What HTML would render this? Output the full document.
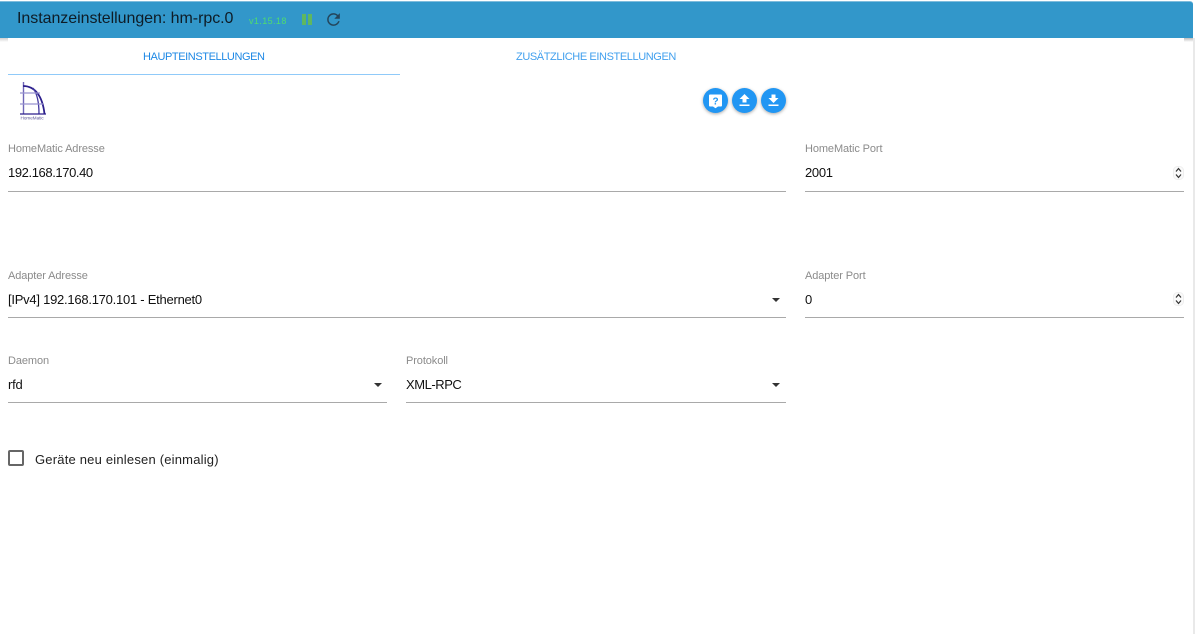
<!DOCTYPE html>
<html lang="de">
<head>
<meta charset="utf-8">
<title>Instanzeinstellungen: hm-rpc.0</title>
<style>
html,body{margin:0;padding:0;width:1200px;height:634px;overflow:hidden;background:#fff;font-family:"Liberation Sans","DejaVu Sans",sans-serif}
body{filter:blur(.3px)}
.a{position:absolute;white-space:nowrap}
#hdr{left:0;top:1px;width:1193px;height:37px;background:#3297ca;border-top:1px solid #7fbcdc;box-sizing:border-box;border-top-right-radius:3px}
#edge{left:1193px;top:38px;width:2px;height:596px;background:#e9e9e9}
#shl{left:0;top:38px;width:8px;height:4px;background:linear-gradient(#d0d0d0,#fff)}
#shr{left:1184px;top:38px;width:9px;height:4px;background:linear-gradient(#bdbdbd,#fff)}
.lbl{font-size:11px;color:#8b8b8b;letter-spacing:-.1px;line-height:14px}
.val{font-size:13px;color:#111;line-height:16px;letter-spacing:-.25px}
.ln{height:1px;background:#a9a9a9}
.tri{width:0;height:0;border-left:4.5px solid transparent;border-right:4.5px solid transparent;border-top:4.5px solid #333}
.fab{width:25px;height:25px;border-radius:50%;background:#2196f3;box-shadow:0 1px 3px rgba(0,0,0,.35)}
.fab svg{position:absolute;left:0;top:0}
</style>
</head>
<body>
<div class="a" id="hdr"></div>
<div class="a" id="edge"></div>
<div class="a" id="shl"></div>
<div class="a" id="shr"></div>

<div class="a" style="left:17px;top:9px;font-size:16px;line-height:20px;color:#0e1c26;letter-spacing:-.05px">Instanzeinstellungen: hm-rpc.0</div>
<div class="a" style="left:249px;top:15px;font-size:9px;line-height:12px;color:#4fdc6f;letter-spacing:.4px">v1.15.18</div>
<div class="a" style="left:302px;top:14px;width:3.500px;height:11px;background:#5fb75f"></div>
<div class="a" style="left:308px;top:14px;width:3.500px;height:11px;background:#5fb75f"></div>
<svg class="a" style="left:324px;top:10px" width="19" height="19" viewBox="0 0 24 24"><path fill="#24465c" d="M17.65 6.35A7.96 7.96 0 0 0 12 4a8 8 0 1 0 7.73 10h-1.800A6.200 6.200 0 1 1 12 5.800c1.720 0 3.240.7 4.340 1.840L13 11h7V4z"/></svg>

<div class="a" style="left:143px;top:50px;font-size:11px;line-height:14px;color:#1e88e5;letter-spacing:-.41px">HAUPTEINSTELLUNGEN</div>
<div class="a" style="left:516px;top:50px;font-size:11px;line-height:14px;color:#42a0ee;letter-spacing:-.4px">ZUSÄTZLICHE EINSTELLUNGEN</div>
<div class="a" style="left:8px;top:74px;width:392px;height:1px;background:#90caf9"></div>

<svg class="a" style="left:18px;top:81px" width="30" height="40" viewBox="0 0 30 40">
<g fill="none">
<path d="M5.500 1V33" stroke="#6f66b8" stroke-width="1.400"/>
<path d="M5 5C17 5 24.500 15 26.500 33" stroke="#2c1f8c" stroke-width="1.800"/>
<path d="M15 7C19.500 13 21 23 21 33" stroke="#4238a0" stroke-width="1.300"/>
<path d="M2 12H22" stroke="#9892cf" stroke-width="1.200"/>
<path d="M2 23H25" stroke="#9892cf" stroke-width="1.200"/>
<path d="M2 33H28" stroke="#2c1f8c" stroke-width="1.300"/>
</g>
<text x="2.500" y="38.500" font-size="4.600" fill="#5a5396" font-family="Liberation Sans,sans-serif">HomeMatic</text>
</svg>

<div class="a fab" style="left:703px;top:88px"><svg width="25" height="25" viewBox="0 0 25 25"><path fill="#fff" d="M7 6.500h11a1 1 0 0 1 1 1v10a1 1 0 0 1-1 1h-3l-2.500 1.800L10 18.500H7a1 1 0 0 1-1-1v-10a1 1 0 0 1 1-1z"/><text x="12.500" y="16.500" text-anchor="middle" font-size="10" font-weight="bold" fill="#2196f3" font-family="Liberation Sans,sans-serif">?</text></svg></div>
<div class="a fab" style="left:732px;top:88px"><svg width="25" height="25" viewBox="0 0 25 25"><path fill="#fff" d="M10.500 14.500v-3.500H7.500l5-5 5 5h-3v3.500zM7.500 16.500h10v1.500h-10z"/></svg></div>
<div class="a fab" style="left:761px;top:88px"><svg width="25" height="25" viewBox="0 0 25 25"><path fill="#fff" d="M10.500 6.500h4V10h3l-5 5-5-5h3zM7.500 16.500h10v1.500h-10z"/></svg></div>

<div class="a lbl" style="left:8px;top:142px">HomeMatic Adresse</div>
<div class="a val" style="left:8px;top:165px;letter-spacing:-.4px">192.168.170.40</div>
<div class="a ln" style="left:8px;top:191px;width:778px"></div>

<div class="a lbl" style="left:805px;top:142px">HomeMatic Port</div>
<div class="a val" style="left:805px;top:165px;letter-spacing:-.3px">2001</div>
<div class="a ln" style="left:805px;top:191px;width:379px"></div>
<svg class="a" style="left:1173px;top:166px" width="11" height="14" viewBox="0 0 11 14"><rect x=".5" y=".5" width="10" height="13" rx="4" fill="#fafafa" stroke="#eee"/><path d="M3 5.500l2.500-3 2.500 3M3 8.500l2.500 3 2.500-3" fill="none" stroke="#333" stroke-width="1.200"/></svg>

<div class="a lbl" style="left:8px;top:269px">Adapter Adresse</div>
<div class="a val" style="left:8px;top:292px">[IPv4] 192.168.170.101 - Ethernet0</div>
<div class="a tri" style="left:772px;top:298px"></div>
<div class="a ln" style="left:8px;top:317px;width:778px"></div>

<div class="a lbl" style="left:805px;top:269px">Adapter Port</div>
<div class="a val" style="left:805px;top:292px">0</div>
<div class="a ln" style="left:805px;top:317px;width:379px"></div>
<svg class="a" style="left:1173px;top:292px" width="11" height="14" viewBox="0 0 11 14"><rect x=".5" y=".5" width="10" height="13" rx="4" fill="#fafafa" stroke="#eee"/><path d="M3 5.500l2.500-3 2.500 3M3 8.500l2.500 3 2.500-3" fill="none" stroke="#333" stroke-width="1.200"/></svg>

<div class="a lbl" style="left:8px;top:354px">Daemon</div>
<div class="a val" style="left:8px;top:377px">rfd</div>
<div class="a tri" style="left:374px;top:383px"></div>
<div class="a ln" style="left:8px;top:402px;width:379px"></div>

<div class="a lbl" style="left:406px;top:354px">Protokoll</div>
<div class="a val" style="left:406px;top:377px;letter-spacing:-.45px">XML-RPC</div>
<div class="a tri" style="left:772px;top:383px"></div>
<div class="a ln" style="left:406px;top:402px;width:380px"></div>

<div class="a" style="left:8px;top:450px;width:12px;height:12px;border:2px solid #666;border-radius:2px"></div>
<div class="a" style="left:35px;top:452px;font-size:13px;line-height:16px;color:#222;letter-spacing:.2px">Geräte neu einlesen (einmalig)</div>
</body>
</html>
